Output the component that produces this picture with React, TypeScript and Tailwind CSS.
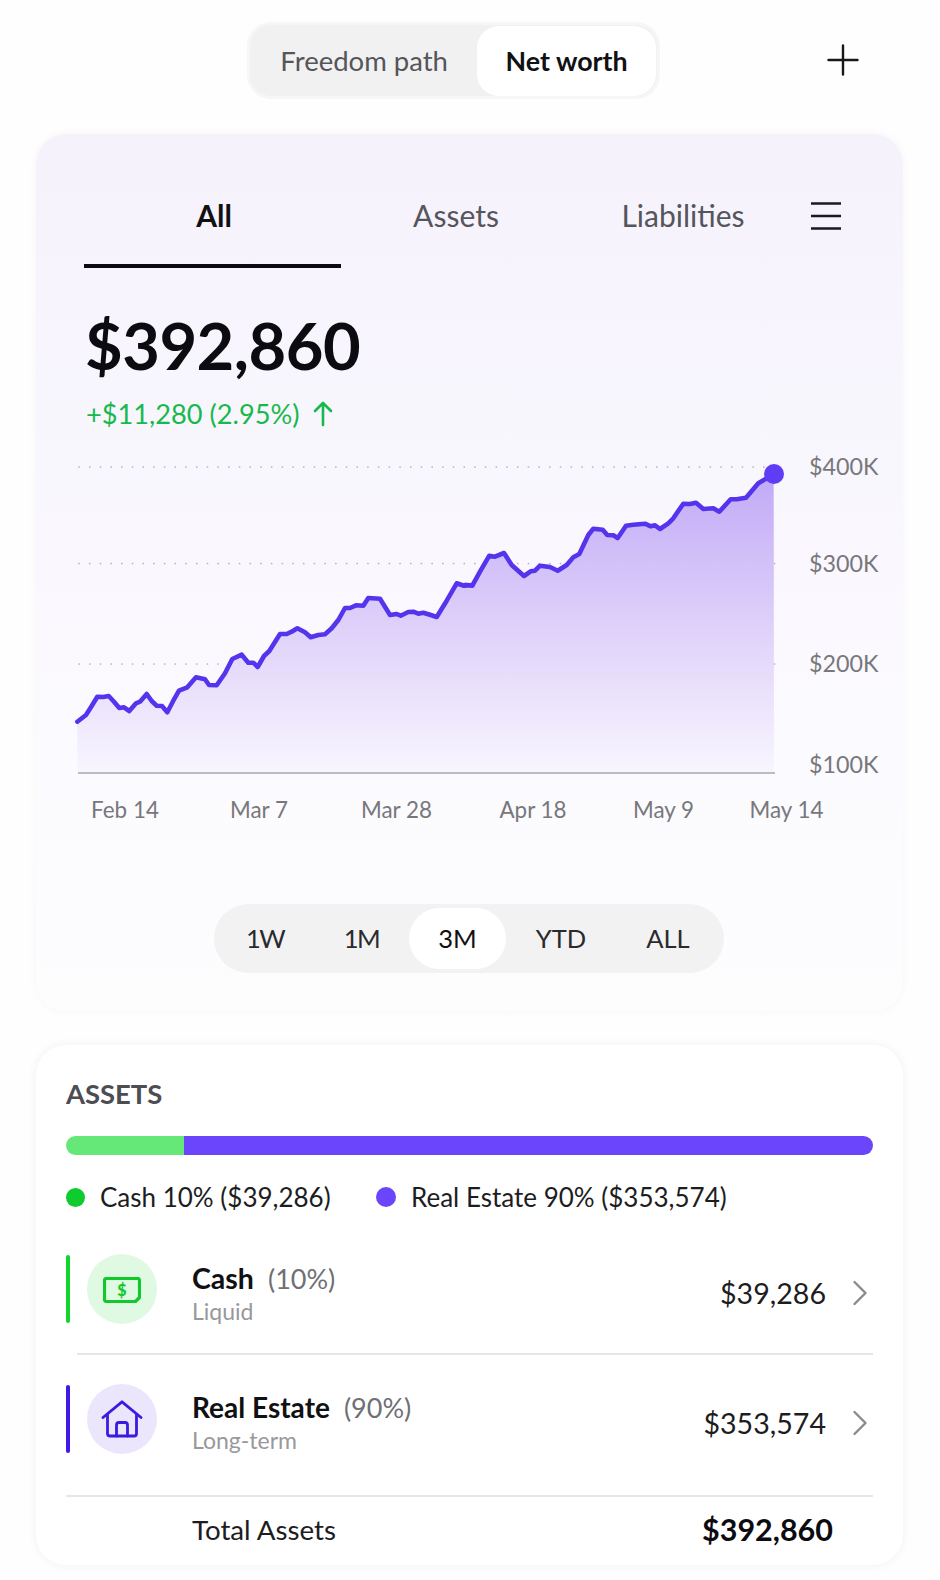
const z2 = "52,815 78,795 95,768 112,740 130,741 146,738 162,755 178,774 192,772 208,783 228,760 240,755 260,732 275,753 290,767 306,768 322,787 340,752 357,722 382,712 408,682 435,688 447,705 470,706 495,670 517,627 545,614 565,638 580,638 593,651 612,618 628,603 660,552 680,552 695,545 712,535 735,547 752,562 775,555 795,553 815,535 835,510 855,474 870,474 888,466 910,467 925,444 960,446 990,495 1010,492 1022,497 1045,486 1060,485 1075,491 1090,488 1110,494 1130,501 1160,452 1190,400 1212,407 1238,406";
const z3 = "15,405 37,407 60,365 88,317 105,320 132,309 155,345 192,378 212,364 225,362 240,347 270,351 293,362 320,345 340,322 358,312 385,255 400,236 428,239 442,255 460,256 473,264 498,227 520,224 555,221 572,229 585,226 600,237 625,220 640,205 670,161 690,162 708,158 730,177 760,175 778,185 812,148 830,148 858,143 895,100 941,72";
const conv = (s: string, ox: number) =>
  s.split(" ").map((p) => {
    const [x, y] = p.split(",").map(Number);
    return `${(x / 3 + ox).toFixed(1)},${(y / 3 + 450).toFixed(1)}`;
  });
const pts = [...conv(z2, 60), ...conv(z3, 460)];
const line = pts.join(" ");
const area = `77.5,773 ${line} 774,773`;

function Chevron() {
  return (
    <svg width="16" height="26" viewBox="0 0 16 26" fill="none" stroke="#8b8b8f" strokeWidth="2.4" strokeLinecap="round" strokeLinejoin="round">
      <path d="M2.5 2 L13.5 13 L2.5 24" />
    </svg>
  );
}

export default function App() {
  const sans = "font-['Lato','Liberation_Sans',sans-serif]";
  return (
    <div className={`w-[940px] h-[1580px] overflow-hidden bg-[#fefefe] ${sans} text-[#111114]`}>
      <div className="flex h-[134px] pt-[22px] pl-[247px] items-start">
        <div className="flex w-[413px] h-[77px] rounded-[24px] bg-[#f1f1f2] border-[3px] border-[#f6f6f7] p-[1px]">
          <div className="w-[228px] h-[70px] flex items-center justify-center text-[27.5px] text-[#55555a]">Freedom path</div>
          <div className="w-[180px] h-[70px] rounded-[22px] bg-white flex items-center justify-center text-[26.8px] font-bold text-[#111114]">Net worth</div>
        </div>
        <svg className="ml-[167px] mt-[22px]" width="32" height="32" viewBox="0 0 32 32" stroke="#18181b" strokeWidth="2.4" strokeLinecap="round">
          <path d="M16 1.5 V30.5 M1.5 16 H30.5" />
        </svg>
      </div>

      <div className="ml-[36px] w-[867px] h-[877px] rounded-[30px] bg-gradient-to-b from-[#f5f2fc] via-[#faf8fe] to-[#fdfdfe] shadow-[0_0_10px_rgba(30,20,60,0.04)] pt-[61px]">
        <div className="flex items-start pl-[48px]">
          <div className="w-[257px] h-[73px] border-b-[4px] border-[#0c0c10]">
            <div className="h-[40px] flex items-center justify-center pl-[3px] text-[30px] font-bold text-[#111114]">All</div>
          </div>
          <div className="w-[230px] h-[40px] flex items-center justify-center text-[30px] text-[#55555c]">Assets</div>
          <div className="w-[224px] h-[40px] flex items-center justify-center text-[30px] text-[#55555c]">Liabilities</div>
          <svg className="ml-[16px] mt-[7px]" width="30" height="28" viewBox="0 0 30 28" stroke="#1a1a1e" strokeWidth="2.6">
            <path d="M0 1.5 H30 M0 14 H30 M0 26.5 H30" />
          </svg>
        </div>

        <div className="mt-[43px] ml-[49px] h-[70px] flex items-center text-[65px] font-bold text-[#0c0c10] tracking-[-0.5px]">$392,860</div>
        <div className="mt-[15px] ml-[50px] h-[36px] flex items-center text-[27.2px] text-[#17b94d]">
          <span>+$11,280 (2.95%)</span>
          <svg className="ml-[12px]" width="22" height="26" viewBox="0 0 22 26" fill="none" stroke="#17b94d" strokeWidth="2.6" strokeLinecap="round" strokeLinejoin="round">
            <path d="M11 24 V2 M3 10 L11 2 L19 10" />
          </svg>
        </div>

        <div className="mt-[19px] flex items-start pl-[34px]">
          <svg width="720" height="334" viewBox="70 451 720 334" className="shrink-0">
            <defs>
              <linearGradient id="areaFill" gradientUnits="userSpaceOnUse" x1="0" y1="474" x2="0" y2="773">
                <stop offset="0" stopColor="#bda4f6" />
                <stop offset="0.5" stopColor="#dccdf9" />
                <stop offset="1" stopColor="#f8f5fe" />
              </linearGradient>
            </defs>
            <g stroke="#b4b0be" strokeWidth="1.7" strokeLinecap="round" strokeDasharray="0.1 10.6">
              <path d="M79 467 H776" />
              <path d="M79 563.5 H776" />
              <path d="M79 664 H776" />
            </g>
            <polygon points={area} fill="url(#areaFill)" fillOpacity="0.93" />
            <path d="M78 773 H775" stroke="#a9a9ad" strokeWidth="1.4" />
            <polyline points={line} fill="none" stroke="#5534ee" strokeWidth="4.6" strokeLinejoin="round" strokeLinecap="round" />
            <circle cx="774" cy="474" r="10" fill="#5f3cf6" />
          </svg>
          <div className="ml-[19px] flex flex-col text-[23.3px] leading-[30px] text-[#77777c]">
            <div className="h-[30px]">$400K</div>
            <div className="h-[30px] mt-[67px]">$300K</div>
            <div className="h-[30px] mt-[70px]">$200K</div>
            <div className="h-[30px] mt-[71px]">$100K</div>
          </div>
        </div>

        <div className="mt-[10px] ml-[24px] h-[30px] grid grid-cols-[130px_138px_137px_136px_125px_121px] text-center text-[22.4px] leading-[30px] text-[#77777c]">
          <div>Feb 14</div>
          <div>Mar 7</div>
          <div>Mar 28</div>
          <div>Apr 18</div>
          <div>May 9</div>
          <div>May 14</div>
        </div>

        <div className="mt-[79px] ml-[178px] w-[510px] h-[69px] rounded-full bg-[#f2f2f3] flex items-center pl-[4px] text-[25.5px] text-[#2a2a2e]">
          <div className="w-[94px] text-center tracking-[-1.5px]">1W</div>
          <div className="w-[97px] pl-[2px] text-center tracking-[-1.5px]">1M</div>
          <div className="w-[97px] h-[61px] rounded-full bg-white flex items-center justify-center text-[#111114]">3M</div>
          <div className="w-[110px] text-center">YTD</div>
          <div className="w-[104px] text-center">ALL</div>
        </div>
      </div>

      <div className="mt-[34px] ml-[36px] w-[867px] h-[520px] rounded-[30px] bg-white shadow-[0_0_10px_rgba(30,20,60,0.06)] px-[30px] pt-[33px]">
        <div className="h-[32px] flex items-center text-[27.4px] font-bold text-[#4c4c52]">ASSETS</div>
        <div className="mt-[26px] h-[19px] rounded-full overflow-hidden flex">
          <div className="w-[118px] bg-[#66e878]" />
          <div className="flex-1 bg-[#6a45fb]" />
        </div>
        <div className="mt-[26px] h-[32px] flex items-center text-[26px] text-[#1d1d21]">
          <div className="w-[19px] h-[19px] rounded-full bg-[#0ecb2e]" />
          <div className="ml-[15px] w-[276px]">Cash 10% ($39,286)</div>
          <div className="w-[20px] h-[20px] rounded-full bg-[#6a45fb]" />
          <div className="ml-[15px]">Real Estate 90% ($353,574)</div>
        </div>

        <div className="mt-[42px] h-[68px] flex items-center">
          <div className="w-[4px] h-[68px] rounded-full bg-[#12d42a]" />
          <div className="ml-[17px] w-[70px] h-[70px] rounded-full bg-[#e0f9e3] flex items-center justify-center">
            <svg className="mt-[2px]" width="38" height="26" viewBox="0 0 38 26" fill="none">
              <path d="M3.5 1.5 H34.5 Q36.5 1.5 36.5 3.5 V20.5 L32.5 24.5 H3.5 Q1.5 24.5 1.5 22.5 V3.5 Q1.5 1.5 3.5 1.5 Z" stroke="#12c92c" strokeWidth="3.2" strokeLinejoin="round" />
              <text x="19" y="19" textAnchor="middle" fontSize="16" fontWeight="900" fill="#12c92c" fontFamily="Lato, sans-serif">$</text>
            </svg>
          </div>
          <div className="ml-[35px] pt-[8px] flex flex-col flex-1">
            <div className="text-[28.5px] leading-[36px] h-[36px] font-bold text-[#111114]">Cash<span className="ml-[14px] text-[27px] font-normal text-[#6f6f74]">(10%)</span></div>
            <div className="text-[23px] leading-[30px] text-[#98989d]">Liquid</div>
          </div>
          <div className="pt-[8px] text-[28.6px] text-[#1d1d21]">$39,286</div>
          <div className="ml-[26px] mr-[5px] pt-[8px]"><Chevron /></div>
        </div>
        <div className="mt-[30px] ml-[11px] h-[2px] bg-[#e6e6e8]" />

        <div className="mt-[30px] h-[68px] flex items-center">
          <div className="w-[4px] h-[68px] rounded-full bg-[#4218e8]" />
          <div className="ml-[17px] w-[70px] h-[70px] rounded-full bg-[#ebe6fc] flex items-center justify-center">
            <svg width="42" height="38" viewBox="0 0 42 38" fill="none" stroke="#3a1be0" strokeWidth="2.8" strokeLinecap="round" strokeLinejoin="round">
              <path d="M2 17.5 L21 1.8 L40 17.5" />
              <path d="M6.5 15 V33.5 Q6.5 36 9 36 H33 Q35.5 36 35.5 33.5 V15" />
              <path d="M15.5 36 V25 Q15.5 22.5 18 22.5 H24 Q26.5 22.5 26.5 25 V36" />
            </svg>
          </div>
          <div className="ml-[35px] pt-[6px] flex flex-col flex-1">
            <div className="text-[28px] leading-[36px] h-[36px] font-bold text-[#111114]">Real Estate<span className="ml-[14px] text-[27px] font-normal text-[#6f6f74]">(90%)</span></div>
            <div className="text-[23px] leading-[30px] text-[#98989d]">Long-term</div>
          </div>
          <div className="pt-[8px] text-[28.6px] text-[#1d1d21]">$353,574</div>
          <div className="ml-[26px] mr-[5px] pt-[8px]"><Chevron /></div>
        </div>
        <div className="mt-[42px] h-[2px] bg-[#e6e6e8]" />

        <div className="mt-[15px] h-[36px] flex items-center pl-[126px] pr-[40px] justify-between">
          <div className="text-[27.7px] text-[#1d1d21]">Total Assets</div>
          <div className="text-[30.5px] font-bold text-[#0c0c10]">$392,860</div>
        </div>
      </div>
    </div>
  );
}
